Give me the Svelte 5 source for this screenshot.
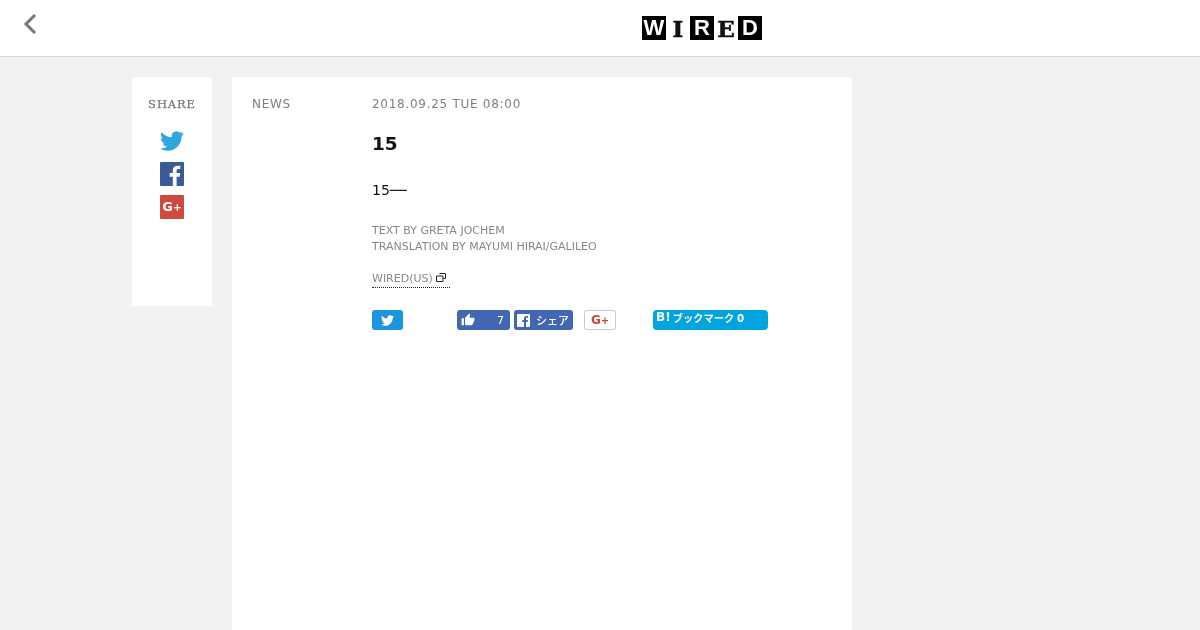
<script>
  const twitter = "M23.953 4.57a10 10 0 01-2.825.775 4.958 4.958 0 002.163-2.723c-.951.555-2.005.959-3.127 1.184a4.92 4.92 0 00-8.384 4.482C7.69 8.095 4.067 6.13 1.64 3.162a4.822 4.822 0 00-.666 2.475c0 1.71.87 3.213 2.188 4.096a4.904 4.904 0 01-2.228-.616v.06a4.923 4.923 0 003.946 4.827 4.996 4.996 0 01-2.212.085 4.936 4.936 0 004.604 3.417 9.867 9.867 0 01-6.102 2.105c-.39 0-.779-.023-1.17-.067a13.995 13.995 0 007.557 2.209c9.053 0 13.998-7.496 13.998-13.985 0-.21 0-.42-.015-.63A9.935 9.935 0 0024 4.59z";
  const fb = "M16.6 24V14.7h3.1l.5-3.6h-3.6V8.8c0-1 .3-1.8 1.8-1.8h1.9V3.8c-.3 0-1.5-.1-2.8-.1-2.8 0-4.7 1.700-4.7 4.800v2.600H9.600v3.600h3.200V24z";
  const thumb = "M1 21h4V9H1v12zm22-11c0-1.100-.9-2-2-2h-6.310l.95-4.570.03-.32c0-.41-.17-.79-.44-1.060L14.170 1 7.590 7.590C7.220 7.950 7 8.450 7 9v10c0 1.100.9 2 2 2h9c.83 0 1.540-.5 1.800-1.220l3.020-7.050c.08-.23.18-.46.18-.73v-2z";
</script>

<header class="top">
  <a class="back" href="#back" aria-label="Back">
    <svg width="16" height="24" viewBox="0 0 16 24"><path d="M13 3 L4 12 L13 21" fill="none" stroke="#777" stroke-width="3"/></svg>
  </a>
  <div class="logo">
    <span class="dark">W</span><span class="light">I</span><span class="dark">R</span><span class="light">E</span><span class="dark">D</span>
  </div>
</header>

<div class="page">
  <aside class="share">
    <div class="share-title">SHARE</div>
    <svg class="ico" width="24" height="24" viewBox="0 0 24 24"><path d={twitter} fill="#2fa6de"/></svg>
    <div class="square fb"><svg width="24" height="24" viewBox="0 0 24 24"><path d={fb} fill="#fff"/></svg></div>
    <div class="square gp">G<small>+</small></div>
  </aside>

  <main class="article">
    <div class="cat">NEWS</div>
    <div class="body">
      <div class="date">2018.09.25 TUE 08:00</div>
      <h1>15</h1>
      <p class="lead">15──</p>
      <p class="credit">TEXT BY GRETA JOCHEM<br />TRANSLATION BY MAYUMI HIRAI/GALILEO</p>
      <a class="source" href="#src">WIRED(US)
        <svg width="10" height="9" viewBox="0 0 10 9"><path d="M3.500 .5h6v5h-2M.5 3h6.500v5.500H.5z" fill="#fff" stroke="#222"/></svg>
      </a>
      <div class="buttons">
        <span class="btn tw"><svg width="13" height="13" viewBox="0 0 24 24"><path d={twitter} fill="#fff"/></svg></span>
        <span class="btn like"><svg width="14" height="14" viewBox="0 0 24 24"><path d={thumb} fill="#fff"/></svg><span>7</span></span>
        <span class="btn fbshare"><span class="f"><svg width="13" height="13" viewBox="0 0 24 24"><path d={fb} fill="#4267b2"/></svg></span><span>シェア</span></span>
        <span class="btn gplus">G<small>+</small></span>
        <span class="btn hatena"><b>B!</b> ブックマーク 0</span>
      </div>
    </div>
  </main>
</div>

<style>
  :global(body) {
    margin: 0;
    background: #f1f1f1;
    font-family: "DejaVu Sans", sans-serif;
    height: 630px;
    overflow: hidden;
  }
  :global(#app) { will-change: transform; }
  .top {
    height: 56px;
    background: #fff;
    border-bottom: 1px solid #d8d8d8;
    display: flex;
    align-items: center;
    padding-left: 22px;
  }
  .back { display: block; height: 24px; margin-top: -9px; }
  .logo { display: flex; margin-left: 604px; }
  .logo span {
    width: 24px;
    height: 24px;
    display: flex;
    align-items: center;
    justify-content: center;
    font-weight: 700;
    line-height: 1;
  }
  .dark { background: #000; color: #fff; font-family: "Liberation Sans", sans-serif; font-size: 22px; }
  .light { background: #fff; color: #111; font-family: "DejaVu Serif", serif; font-size: 23px; -webkit-text-stroke: 0.5px #111; }

  .page {
    display: flex;
    gap: 20px;
    margin: 20px 0 0 132px;
    align-items: flex-start;
  }
  .share {
    width: 80px;
    height: 229px;
    background: #fff;
    display: flex;
    flex-direction: column;
    align-items: center;
    padding-top: 20px;
    box-sizing: border-box;
  }
  .share-title {
    font-family: "DejaVu Serif", serif;
    font-size: 11.500px;
    letter-spacing: 0.900px;
    -webkit-text-stroke: 0.25px #777;
    color: #777;
    line-height: 14px;
    margin-bottom: 18px;
  }
  .ico { display: block; margin-bottom: 9px; }
  .square {
    width: 24px;
    height: 24px;
    border-radius: 1px;
    margin-bottom: 9px;
    overflow: hidden;
  }
  .square svg { display: block; }
  .fb { background: #3a5a98; }
  .gp {
    background: #cf4a3e;
    color: #fff;
    font-weight: 700;
    font-size: 13px;
    line-height: 24px;
    text-align: center;
  }
  small { font-size: 0.8em; }
  .article {
    width: 620px;
    height: 553px;
    background: #fff;
    display: flex;
    box-sizing: border-box;
    padding: 20px 0 0 20px;
  }
  .cat {
    width: 120px;
    font-size: 12px;
    letter-spacing: 0.720px;
    color: #808080;
    line-height: 14px;
  }
  .date {
    font-size: 12px;
    letter-spacing: 0.720px;
    color: #808080;
    line-height: 14px;
  }
  h1 {
    margin: 21px 0 0;
    font-size: 18.500px;
    line-height: 24px;
    font-weight: 700;
    color: #111;
  }
  .lead {
    margin: 24px 0 0;
    font-size: 14px;
    line-height: 20px;
    color: #111;
  }
  .credit {
    margin: 23px 0 0;
    font-size: 11px;
    line-height: 16px;
    color: #888;
  }
  .source {
    display: inline-block;
    margin-top: 16px;
    font-size: 11px;
    line-height: 16px;
    color: #888;
    text-decoration: none;
    border-bottom: 1px dotted #222;
    width: 78px;
  }
  .buttons {
    display: flex;
    margin-top: 22px;
    align-items: flex-start;
    height: 20px;
  }
  .btn {
    height: 20px;
    border-radius: 3px;
    box-sizing: border-box;
    display: flex;
    align-items: center;
    color: #fff;
    font-size: 11px;
    font-family: "DejaVu Sans", "Noto Sans CJK JP", sans-serif;
  }
  .tw { background: #1b95e0; width: 31px; justify-content: center; }
  .like {
    background: #4267b2;
    width: 53px;
    margin-left: 54px;
    padding: 0 6px 0 4px;
    justify-content: space-between;
  }
  .fbshare {
    background: #4267b2;
    width: 59px;
    margin-left: 4px;
    padding-left: 3px;
    gap: 6px;
    font-weight: 500;
  }
  .f { width: 13px; height: 13px; background: #fff; border-radius: 1px; display: block; overflow: hidden; }
  .f svg { display: block; }
  .gplus {
    width: 32px;
    margin-left: 11px;
    background: #fff;
    border: 1px solid #ccc;
    border-radius: 2px;
    color: #c9463a;
    font-size: 12px;
    font-weight: 700;
    justify-content: center;
  }
  .hatena {
    width: 115px;
    margin-left: 37px;
    background: #00a4de;
    border-radius: 4px;
    font-size: 10.300px;
    font-weight: 700;
    padding: 0 0 6px 3px;
    gap: 2px;
    word-spacing: -1px;
  }
  .hatena b { font-size: 12px; }
</style>
